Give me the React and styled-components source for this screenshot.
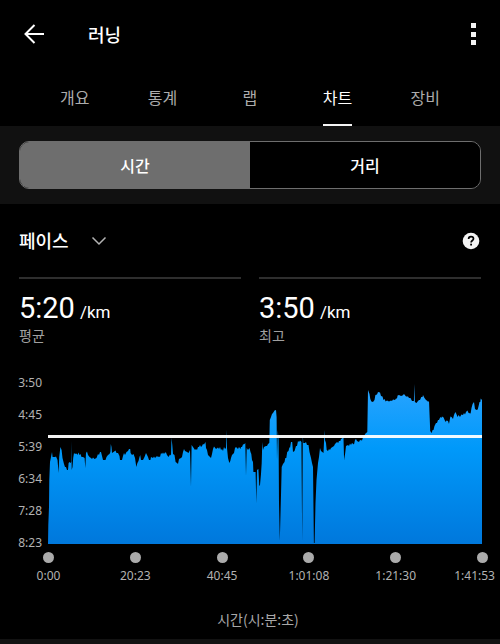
import React, { useState } from "react";
import styled, { createGlobalStyle } from "styled-components";

const GlobalStyle = createGlobalStyle`
  *, *::before, *::after { box-sizing: border-box; }
  body {
    margin: 0;
    background: #000;
    color: #fff;
    font-family: Roboto, "Noto Sans CJK KR", sans-serif;
  }
  button, select { font: inherit; color: inherit; border: 0; padding: 0; background: none; cursor: pointer; }
  ul, ol, p, h1, dl, dd { margin: 0; padding: 0; list-style: none; }
`;

const Page = styled.main`
  display: flex;
  flex-direction: column;
  min-height: 100vh;
  overflow-x: hidden;
`;

const Header = styled.header`
  display: flex;
  align-items: center;
  height: 68px;
  padding: 0 20px;
`;

const IconButton = styled.button`
  display: flex;
  align-items: center;
  justify-content: center;
  width: ${(p) => p.$width}px;
  height: 28px;
`;

const Title = styled.h1`
  flex: 1;
  margin-left: 40px;
  font: 500 18px/28px "Noto Sans CJK KR", sans-serif;
`;

const Tabs = styled.div`
  display: flex;
  height: 58px;
  padding: 0 31px;
`;

const Tab = styled.button`
  flex: 1;
  display: flex;
  justify-content: center;
  color: ${(p) => (p.$active ? "#fff" : "#acacac")};
`;

const TabLabel = styled.span`
  position: relative;
  height: 58px;
  font: 400 16px/58px "Noto Sans CJK KR", sans-serif;

  &::after {
    content: "";
    position: absolute;
    left: 0;
    right: 0;
    bottom: 0;
    height: 2px;
    background: ${(p) => (p.$active ? "#f4f4f4" : "transparent")};
  }
`;

const Band = styled.div`
  padding: 15px 19px;
  background: #111;
`;

const Segments = styled.div`
  display: flex;
  height: 48px;
  border: 1px solid #6e6e6e;
  border-radius: 10px;
  overflow: hidden;
`;

const Segment = styled.button`
  flex: 1;
  font: 500 16px/46px "Noto Sans CJK KR", sans-serif;
  background: ${(p) => (p.$active ? "#6e6e6e" : "#000")};
`;

const MetricBar = styled.div`
  display: flex;
  align-items: center;
  justify-content: space-between;
  height: 73px;
  padding: 0 20px 0 19px;
`;

const MetricPicker = styled.label`
  display: grid;
  align-items: center;
  justify-items: end;

  > * { grid-area: 1 / 1; }
  > svg { pointer-events: none; }
`;

const MetricSelect = styled.select`
  appearance: none;
  width: 88px;
  height: 32px;
  padding-bottom: 2px;
  font: 500 18px/30px "Noto Sans CJK KR", sans-serif;

  option { color: #000; }
`;

const Stats = styled.dl`
  display: grid;
  grid-template-columns: 1fr 1fr;
  gap: 18px;
  padding: 0 19px;
`;

const Stat = styled.div`
  display: flex;
  flex-direction: column-reverse;
  padding-top: 12px;
  border-top: 2px solid #2e2e2e;
`;

const StatValue = styled.dd`
  font-size: 29px;
  line-height: 34px;
`;

const StatUnit = styled.span`
  margin-left: 5px;
  font-size: 17px;
  line-height: 1;
`;

const StatLabel = styled.dt`
  color: #a0a0a0;
  font: 400 14px/20px "Noto Sans CJK KR", sans-serif;
`;

const Chart = styled.section`
  margin-top: 30px;
  padding-right: 18px;
  color: #b2b2b2;
  font: 400 12px/16px "Noto Sans", sans-serif;
`;

const Plot = styled.div`
  display: grid;
  grid-template-columns: 48px 1fr;
`;

const YAxis = styled.ul`
  display: flex;
  flex-direction: column;
  gap: 16px;
  padding-right: 6px;
  text-align: right;
`;

const Area = styled.svg`
  display: block;
  width: 100%;
  height: 164px;
  margin-top: 5px;
`;

const TickRow = styled.ol`
  display: flex;
  justify-content: space-between;
  margin: 1px -6px 0 43px;
`;

const Tick = styled.li`
  display: flex;
  flex-direction: column;
  align-items: center;
  width: 11px;
  white-space: nowrap;

  &:last-child { align-items: flex-end; }
`;

const Dot = styled.span`
  width: 11px;
  height: 11px;
  border-radius: 50%;
  background: #ababab;
`;

const TickLabel = styled.span`
  margin-top: 5px;

  ${Tick}:last-child & { margin-right: -7px; }
`;

const AxisTitle = styled.p`
  margin: 24px 0 0 34px;
  text-align: center;
  color: #a8a8a8;
  font: 400 14px/22px "Noto Sans CJK KR", sans-serif;
`;

const Footer = styled.div`
  flex: 1;
  min-height: 5px;
  margin-top: 9px;
  background: #121212;
`;

const TABS = ["개요", "통계", "랩", "차트", "장비"];
const MODES = ["시간", "거리"];
const STATS = [
  { label: "평균", value: "5:20" },
  { label: "최고", value: "3:50" },
];
const PACES = ["3:50", "4:45", "5:39", "6:34", "7:28", "8:23"];
const TIMES = ["0:00", "20:23", "40:45", "1:01:08", "1:21:30", "1:41:53"];

/* Pace trace: x along the run, y down from the fastest pace. */
const TRACE = `
0,164 0.3,145 1,127 1.3,100 2,82 3,77 4,72 4.6,77 7,77 8,76.5 9.5,80 10.6,93 11.2,77 12.4,67 13.6,70 14.5,78
16,84 17,87 18,87 19,90 20,90 20.6,83 21.6,82 22.4,83 23.2,82 23.4,61 23.7,90 24.5,87 25.2,78 26,73 27,74 28,73.5
29,74 29.6,75 30.4,72.5 31.5,75 32.5,74 33.5,77 35,77 36.6,78 37.3,88 38,73 39,71.5 40,75 41.5,77 43,78 44,79
45,77.5 46.5,79 48.5,78 50,74 51,75 52,72 53,72 54,76 55,80 57.5,80 58.5,77 60,75 61.5,74 62.4,72 62.8,64 63.5,67
64,73 65.5,72 67.5,70.5 68.5,73 70,73 71.5,76 72,80 74,80 75,76 76,73 77,75 78.5,72 80,71 81,69 82.2,69 82.6,73
84,75 85.5,74 87,78 88.3,87 89.4,83 90.5,81 91.5,77 92.2,75 93,80 95,80 96.5,77 98,73 99,75 100,77 101,80
102.4,80 103,77 105,78 106,76.5 107,78 109,76 110,77 111,76.5 112,77 113,73 114,74 115,72.5 116,74 117,72.5 118,72.5
119,75 120.5,77 122,74.5 123,75.5 123.5,58 124.3,65 125,74 126.5,75 127.6,82 129,83 130,84 131,79 133,78 134,77 135,72
136,69 137,71 139,72 140.5,73 142,70 143,107 143.6,65 145,67 147,70 148,69 149,70 150,67 151,67 152,65 153,67 154,66
155,64 156,64.5 157.5,62 158,68 159,70 160,75 162,77 163,78 164,74 165,69 166,66.5 168,69 170,67.5 171,69 172,67
173,70 174,69 175,71 176,67 177,69 178,68 178.4,50 179,68 180,78 181.3,83 182.3,81 183,78 184,75 186,73 187,68
188,67 190,69 191,67 192.5,69 193,67 194,67 195,64.5 196.5,64 197.3,63 198,96 198.7,68 200,70 201.5,68 202.5,72 203.3,74
204,80 205,82 205.4,92 207.6,92 208.3,123 209,90 210.4,89 211.3,106 212,105 213,94 213.7,83 214.3,62 215,70
216,67 218,66 219,66 220,64 221.3,63 221.8,40 223,37 224,34 225,33 226.5,30.5 228,30 228.6,37 229,80 229.8,50
230.6,60 231,123 231.8,161 233,115 233.7,87 235,84 236.5,82 237.3,78 238.3,78 239.2,72 240.5,71 241.5,67 242,68
243,62 244.2,62 245,72 246.5,71 248,66 249,66 250,61 251,62 252,60.5 253.4,62 254.2,161 254.8,55 255.3,63
257,63 258,62 259,65 260.5,65 261.5,72 263,78 264,83 265,87 265.9,163 266.6,163 267.5,123 268.5,100 270,83
271,77 272,68 273,71 275.5,73 276,62 276.5,50 277,60 278,63 278.7,70 280,71 281,69 282,70 283,68 284.5,67 286,66
287,64 289,62 290.2,63 291,61 292.3,61 293,59 294,58.5 295,57.5 295.4,55 296.1,80 297.2,73 298,66 300,65 301,66
302,63.5 303,65 304,63 306,64.5 307,60 308,59 309,61 311,62 312,60 314,60.5 315,57.5 316,56 317.5,53.5 319.3,52
320,10 321.5,14 322.3,19 323.4,21.5 325,22 326.5,20 327.4,15 329,14.5 330,12 332,12.5 333,16 334.5,16.5
335.5,20 336.6,19 337.6,21.5 339,20.5 341,21.5 343,20.5 344,21 345,19.5 347,20 348,18.5 349,18.5 349.6,15.5 351,15
353,16 354.5,15.5 356,14 358,16.5 360,16.5 361,18 362.5,18 364,21 365.9,21 366.3,4 366.9,22 368.5,23 370,21
371,20 372,20 373.3,17 374.5,17 375,15 376.5,18 378,20 379.5,21 380,22 381,21 381.7,38 382.2,51 383.7,53 384.6,50
385.5,50 386.5,46 388,43 389,43 390,40 391,40 392.3,37 393.3,38 394,36.5 395.6,37.5 396.6,40 397.7,42 398.5,40.5
400,41 401,44 402.4,36.5 403.5,37 405,39 406,35 407.3,32 408.4,34 409.5,37 410.6,35 412,37 413.4,34.5 415,35
416,33 417,34.5 418,32 419.4,30.5 420.6,33 422.6,33.5 423.5,28 424.6,24 426,22 427,29 428.5,30 429.7,29.5 430.6,26
431.5,22 432.3,22 432.7,18.5 434,20 434,164`;

function PaceArea() {
  return (
    <Area viewBox="0 0 434 164" preserveAspectRatio="none" role="img" aria-label="페이스 차트">
      <defs>
        <linearGradient id="pace" gradientUnits="userSpaceOnUse" x1="0" y1="4" x2="0" y2="164">
          <stop offset="0" stopColor="#2aa4ff" />
          <stop offset="0.4" stopColor="#0099fa" />
          <stop offset="1" stopColor="#0078dc" />
        </linearGradient>
      </defs>
      <polygon points={TRACE} fill="url(#pace)" />
      <rect x="0" y="55" width="434" height="3" fill="#fff" opacity="0.95" />
    </Area>
  );
}

export default function App() {
  const [tab, setTab] = useState("차트");
  const [mode, setMode] = useState("시간");

  return (
    <Page>
      <GlobalStyle />
      <Header>
        <IconButton $width={28} aria-label="뒤로">
          <svg width="22" height="22" viewBox="0 0 22 22" fill="none" stroke="#fff" strokeWidth="2">
            <path d="M21 11H3M11.500 2L2.500 11l9 9" />
          </svg>
        </IconButton>
        <Title>러닝</Title>
        <IconButton $width={14} aria-label="더보기">
          <svg width="5" height="23" viewBox="0 0 5 23" fill="#f4f4f4">
            <path d="M0 0h5v5H0zM0 9h5v5H0zM0 17h5v5H0z" />
          </svg>
        </IconButton>
      </Header>

      <Tabs role="tablist">
        {TABS.map((name) => (
          <Tab key={name} role="tab" aria-selected={tab === name} $active={tab === name} onClick={() => setTab(name)}>
            <TabLabel $active={tab === name}>{name}</TabLabel>
          </Tab>
        ))}
      </Tabs>

      <Band>
        <Segments>
          {MODES.map((name) => (
            <Segment key={name} aria-pressed={mode === name} $active={mode === name} onClick={() => setMode(name)}>
              {name}
            </Segment>
          ))}
        </Segments>
      </Band>

      <MetricBar>
        <MetricPicker>
          <MetricSelect aria-label="지표" defaultValue="페이스">
            <option>페이스</option>
          </MetricSelect>
          <svg width="16" height="10" viewBox="0 0 16 10" fill="none" stroke="#b4b4b4" strokeWidth="1.5">
            <path d="M1.500 1.500L8 8l6.500-6.500" />
          </svg>
        </MetricPicker>
        <IconButton $width={18} aria-label="도움말">
          <svg width="18" height="18" viewBox="0 0 18 18">
            <circle cx="9" cy="9" r="8.300" fill="#f4f4f4" />
            <path d="M6.600 7.100C6.600 5.400 7.600 4.700 9 4.700s2.500.8 2.500 2.100c0 1.700-2.400 1.700-2.400 3.700" fill="none" stroke="#000" strokeWidth="1.700" />
            <rect x="8.200" y="11.700" width="1.800" height="1.800" fill="#000" />
          </svg>
        </IconButton>
      </MetricBar>

      <Stats>
        {STATS.map((stat) => (
          <Stat key={stat.label}>
            <StatLabel>{stat.label}</StatLabel>
            <StatValue>
              {stat.value}
              <StatUnit>/km</StatUnit>
            </StatValue>
          </Stat>
        ))}
      </Stats>

      <Chart>
        <Plot>
          <YAxis>
            {PACES.map((pace) => (
              <li key={pace}>{pace}</li>
            ))}
          </YAxis>
          <PaceArea />
        </Plot>
        <TickRow>
          {TIMES.map((time) => (
            <Tick key={time}>
              <Dot />
              <TickLabel>{time}</TickLabel>
            </Tick>
          ))}
        </TickRow>
        <AxisTitle>시간(시:분:초)</AxisTitle>
      </Chart>
      <Footer />
    </Page>
  );
}
